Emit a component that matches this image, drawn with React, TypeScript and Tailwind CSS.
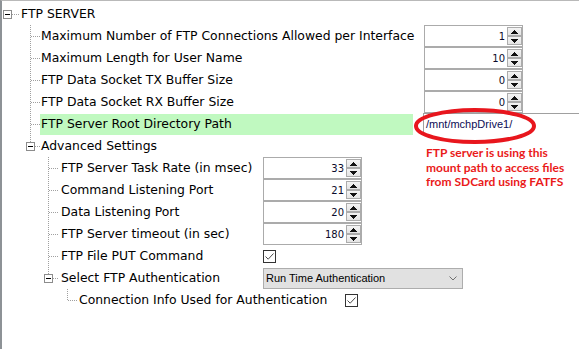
import React from "react";

const DOT = "#a0a0a0";

function V({ x, y1 = 0, y2 = 22 }: { x: number; y1?: number; y2?: number }) {
    return <line x1={x + 0.5} y1={y1} x2={x + 0.5} y2={y2} stroke={DOT} strokeDasharray="1 1" />;
}

function H({ x1, x2, y = 11 }: { x1: number; x2: number; y?: number }) {
    return <line x1={x1} y1={y + 0.5} x2={x2} y2={y + 0.5} stroke={DOT} strokeDasharray="1 1" />;
}

// 9x9 collapse box, [-]
function Box({ x, y = 7 }: { x: number; y?: number }) {
    return (
        <g>
            <rect x={x + 0.5} y={y + 0.5} width={8} height={8} fill="white" stroke="#8c8c8c" />
            <line x1={x + 2} y1={y + 4.5} x2={x + 7} y2={y + 4.5} stroke="#000" />
        </g>
    );
}

function Guide({ width, children }: { width: number; children?: React.ReactNode }) {
    return (
        <svg width={width} height={22} className="shrink-0" shapeRendering="crispEdges">
            {children}
        </svg>
    );
}

function Arrow({ up }: { up?: boolean }) {
    return (
        <div className="flex h-[9px] w-[15px] items-center justify-center border border-[#acacac] bg-gradient-to-b from-[#f4f4f4] to-[#e4e4e4]">
            <svg width="7" height="4" shapeRendering="crispEdges">
                {up ? <path d="M3.5 0 L7 4 L0 4 Z" fill="#111" /> : <path d="M0 0 L7 0 L3.5 4 Z" fill="#111" />}
            </svg>
        </div>
    );
}

function Spinner({ value }: { value: string }) {
    return (
        <div className="flex h-[22px] w-[99px] shrink-0 items-center border border-[#ababab] bg-white">
            <span className="flex-1 pr-[2px] text-right font-['DejaVu_Sans',sans-serif] text-[10px] text-[#0b0b2a]">{value}</span>
            <div className="flex flex-col">
                <Arrow up />
                <Arrow />
            </div>
        </div>
    );
}

function Check() {
    return (
        <div className="flex h-[13px] w-[13px] shrink-0 items-center justify-center border border-[#333] bg-white">
            <svg width="11" height="11">
                <path d="M1.5 5.5 L4.2 8.2 L9.5 2.5" fill="none" stroke="#4a4a4a" strokeWidth="1" />
            </svg>
        </div>
    );
}

function Label({ w, green, children }: { w: string; green?: boolean; children: React.ReactNode }) {
    return (
        <div className={`${w} flex h-[21px] shrink-0 items-center pl-px ${green ? "bg-[#c0f9c0]" : ""}`}>
            <span className="whitespace-nowrap">{children}</span>
        </div>
    );
}

export default function App() {
    const top = [
        ["Maximum Number of FTP Connections Allowed per Interface", "1"],
        ["Maximum Length for User Name", "10"],
        ["FTP Data Socket TX Buffer Size", "0"],
        ["FTP Data Socket RX Buffer Size", "0"],
    ];
    const adv = [
        ["FTP Server Task Rate (in msec)", "33"],
        ["Command Listening Port", "21"],
        ["Data Listening Port", "20"],
        ["FTP Server timeout (in sec)", "180"],
    ];

    return (
        <div className="relative h-[349px] w-[579px] overflow-hidden border-l-2 border-t border-l-[#8d9296] border-t-[#b9b9b9] bg-white pt-[2px] font-['DejaVu_Sans',sans-serif] text-[12.4px] text-black">
            {/* root node */}
            <div className="-ml-[2px] flex h-[22px] items-center">
                <Guide width={20}>
                    <Box x={3} />
                    <H x1={12} x2={20} />
                    <V x={30} y1={20} y2={22} />
                </Guide>
                <span className="pl-px">FTP SERVER</span>
            </div>

            {top.map(([label, value]) => (
                <div key={label} className="-ml-[2px] flex h-[22px] items-center">
                    <Guide width={40}>
                        <V x={30} />
                        <H x1={31} x2={40} />
                    </Guide>
                    <Label w="w-[373px]">{label}</Label>
                    <div className="w-[11px] shrink-0" />
                    <Spinner value={value} />
                </div>
            ))}

            <div className="-ml-[2px] flex h-[22px] items-center">
                <Guide width={40}>
                    <V x={30} />
                    <H x1={31} x2={40} />
                </Guide>
                <Label w="w-[373px]" green>
                    FTP Server Root Directory Path
                </Label>
                <div className="w-[10px] shrink-0" />
                <div className="flex h-[22px] flex-1 items-center border-l border-t border-[#a0a0a0] bg-white pl-[2px] font-['Liberation_Sans',sans-serif] text-[11px] text-[#0c0c55]">
                    /mnt/mchpDrive1/
                </div>
            </div>

            {/* Advanced Settings */}
            <div className="-ml-[2px] flex h-[22px] items-center">
                <Guide width={40}>
                    <V x={30} y1={0} y2={7} />
                    <Box x={26} />
                    <H x1={35} x2={40} />
                    <V x={48} y1={16} y2={22} />
                </Guide>
                <span className="pl-px">Advanced Settings</span>
            </div>

            {adv.map(([label, value]) => (
                <div key={label} className="-ml-[2px] flex h-[22px] items-center">
                    <Guide width={60}>
                        <V x={48} />
                        <H x1={49} x2={59} />
                    </Guide>
                    <Label w="w-[203px]">{label}</Label>
                    <Spinner value={value} />
                </div>
            ))}

            <div className="-ml-[2px] flex h-[22px] items-center">
                <Guide width={60}>
                    <V x={48} />
                    <H x1={49} x2={59} />
                </Guide>
                <Label w="w-[203px]">FTP File PUT Command</Label>
                <Check />
            </div>

            <div className="-ml-[2px] flex h-[22px] items-center">
                <Guide width={60}>
                    <V x={48} y1={0} y2={7} />
                    <Box x={44} />
                    <H x1={53} x2={59} />
                    <V x={67} y1={16} y2={22} />
                </Guide>
                <Label w="w-[203px]">Select FTP Authentication</Label>
                <div className="flex h-[21px] w-[200px] shrink-0 items-center justify-between border border-[#adadad] bg-[#e1e1e1] pl-[2px] pr-[5px] font-['Liberation_Sans',sans-serif] text-[11px]">
                    <span>Run Time Authentication</span>
                    <svg width="8" height="5">
                        <path d="M0.5 0.5 L4 4 L7.5 0.5" fill="none" stroke="#707070" />
                    </svg>
                </div>
            </div>

            <div className="-ml-[2px] flex h-[22px] items-center">
                <Guide width={78}>
                    <V x={67} y1={0} y2={11} />
                    <H x1={68} x2={78} />
                </Guide>
                <Label w="w-[267px]">Connection Info Used for Authentication</Label>
                <Check />
            </div>

            {/* annotation */}
            <svg width="128" height="44" className="pointer-events-none absolute left-[409px] top-[104px]">
                <ellipse cx="64" cy="21" rx="59" ry="16" fill="none" stroke="#e8161d" strokeWidth="4" />
            </svg>
            <div className="absolute left-[424px] top-[145px] font-['Lato',sans-serif] text-[12px] font-bold leading-[14.5px] text-[#ea1a1a]">
                <div>FTP server is using this</div>
                <div>mount path to access files</div>
                <div>from SDCard using FATFS</div>
            </div>
        </div>
    );
}
